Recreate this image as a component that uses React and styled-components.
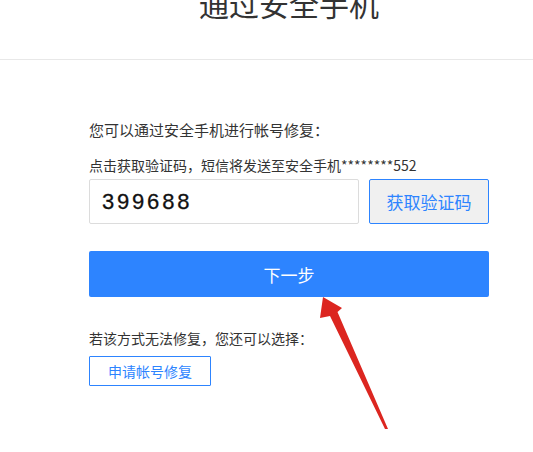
import React from "react";
import styled, { createGlobalStyle } from "styled-components";

const Global = createGlobalStyle`
  html, body { margin: 0; padding: 0; background: #fff; }
  body { font-family: "Noto Sans CJK SC", "Noto Sans", sans-serif; color: #333; }
`;

const Page = styled.div`
  position: relative;
  width: 533px;
  height: 452px;
  overflow: hidden;
  background: #fff;
`;

const Header = styled.header`
  display: flex;
  flex-direction: column;
  height: 60px;
  border-bottom: 1px solid #e8e8e8;
  box-sizing: border-box;
  padding-left: 89px;
  width: 533px;
`;

const Title = styled.h1`
  width: 400px;
  margin: -13px 0 0;
  text-align: center;
  font-size: 30px;
  line-height: 32px;
  font-weight: 400;
  color: #333;
`;

const Content = styled.main`
  display: flex;
  flex-direction: column;
  width: 400px;
  padding: 60px 0 0 89px;
`;

const Lead = styled.p`
  margin: 0;
  font-size: ${(p) => p.$size || 14}px;
  line-height: 20px;
  color: #333;
  margin-top: ${(p) => p.$top || 0}px;
`;

const CodeRow = styled.div`
  display: flex;
  gap: 10px;
  margin-top: 4px;
  height: 45px;
`;

const CodeInput = styled.input`
  box-sizing: border-box;
  width: 270px;
  height: 45px;
  border: 1px solid #dcdcdc;
  border-radius: 2px;
  padding: 0 0 0 12px;
  font-family: "Liberation Sans", Arial, sans-serif;
  font-size: 22px;
  letter-spacing: 2.8px;
  color: #111;
  -webkit-text-stroke: 0.3px #111;
  outline: none;
`;

const GetCodeButton = styled.button`
  box-sizing: border-box;
  width: 120px;
  height: 45px;
  background: #f0f0f0;
  border: 1px solid #2d84ff;
  border-radius: 2px;
  color: #2d84ff;
  font-family: inherit;
  font-size: 17px;
  padding: 0;
`;

const PrimaryButton = styled.button`
  box-sizing: border-box;
  width: 400px;
  height: 46px;
  margin-top: 27px;
  background: #2d84ff;
  border: none;
  border-radius: 2px;
  color: #fff;
  font-family: inherit;
  font-size: 17px;
  padding: 0;
`;

const OutlineButton = styled.button`
  box-sizing: border-box;
  width: 122px;
  height: 30px;
  margin-top: 8px;
  background: #fff;
  border: 1px solid #2d84ff;
  border-radius: 1px;
  color: #2d84ff;
  font-family: inherit;
  font-size: 14px;
  padding: 0;
`;

const ArrowOverlay = styled.svg`
  position: absolute;
  left: 0;
  top: 0;
  pointer-events: none;
`;

export default function App() {
  return (
    <Page>
      <Global />
      <Header>
        <Title>通过安全手机</Title>
      </Header>
      <Content>
        <Lead $size={15}>您可以通过安全手机进行帐号修复：</Lead>
        <Lead $size={14} $top={15}>点击获取验证码，短信将发送至安全手机********552</Lead>
        <CodeRow>
          <CodeInput defaultValue="399688" />
          <GetCodeButton>获取验证码</GetCodeButton>
        </CodeRow>
        <PrimaryButton>下一步</PrimaryButton>
        <Lead $size={14} $top={31}>若该方式无法修复，您还可以选择：</Lead>
        <OutlineButton>申请帐号修复</OutlineButton>
      </Content>
      <ArrowOverlay width="533" height="452" viewBox="0 0 533 452">
        <polygon
          points="323,297 342,308 337.5,312 388,429 385,429 330,316 320,318"
          fill="#dc2620"
        />
      </ArrowOverlay>
    </Page>
  );
}
